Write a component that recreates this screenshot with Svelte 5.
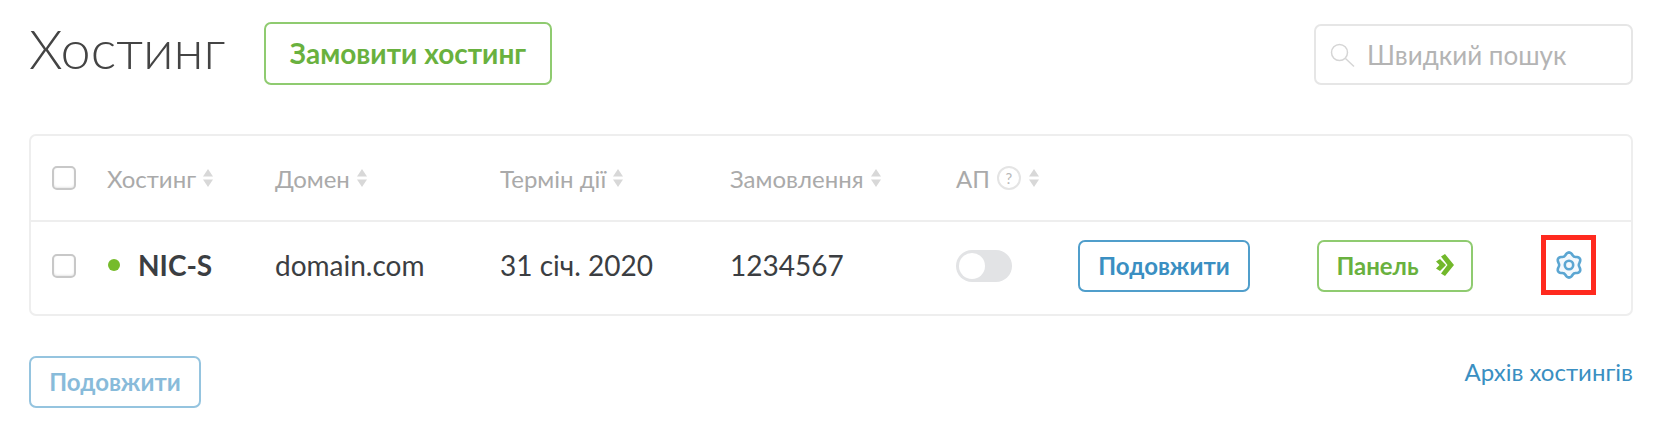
<script lang="ts">
	const columns = ['Хостинг', 'Домен', 'Термін дії', 'Замовлення'];

	// six soft lobes around the centre of a 28x28 box
	const gearPoints = Array.from({ length: 72 }, (_, i) => {
		const angle = (i * Math.PI) / 36;
		const radius = 11.2 + 1.4 * Math.cos(6 * (angle - Math.PI / 2));
		return `${(14 + radius * Math.cos(angle)).toFixed(2)},${(14 + radius * Math.sin(angle)).toFixed(2)}`;
	}).join(' ');
</script>

{#snippet sort()}
	<svg class="sort" viewBox="0 0 12 20" width="12" height="20" aria-hidden="true">
		<path d="M6 1 11 8.500H1z" />
		<path d="M6 19 1 11.500h10z" />
	</svg>
{/snippet}

<main class="page">
	<header class="top">
		<h1 class="top__title">Хостинг</h1>
		<button class="btn btn--green btn--large">Замовити хостинг</button>
		<div class="search">
			<svg class="search__icon" viewBox="0 0 26 26" width="26" height="26" aria-hidden="true">
				<circle cx="10.5" cy="10.5" r="8" />
				<path d="m16.500 16.500 8.500 8" />
			</svg>
			<span class="search__text">Швидкий пошук</span>
		</div>
	</header>

	<section class="card">
		<div class="row row--head">
			<span class="check"></span>
			{#each columns as column}
				<span class="cell-head">{column} {@render sort()}</span>
			{/each}
			<span class="cell-head">
				АП
				<span class="hint">?</span>
				{@render sort()}
			</span>
		</div>
		<div class="row row--body">
			<span class="check"></span>
			<span class="name cell"><i class="dot"></i>NIC-S</span>
			<span class="cell">domain.com</span>
			<span class="cell">31 січ. 2020</span>
			<span class="cell">1234567</span>
			<span class="toggle"><i></i></span>
			<button class="btn btn--blue">Подовжити</button>
			<button class="btn btn--green btn--panel">
				Панель
				<svg viewBox="0 0 18 22" width="18" height="22" aria-hidden="true">
					<path d="M0 7.500 4 5l6 6-6 6-4-2.500L3.500 11z" />
					<path d="M5 2.500 9 0l9 11-9 11-4-2.500L11.500 11z" />
				</svg>
			</button>
			<span class="settings">
				<svg viewBox="0 0 28 28" width="28" height="28" aria-hidden="true">
					<polygon points={gearPoints} />
					<circle cx="14" cy="14" r="4.200" />
				</svg>
			</span>
		</div>
	</section>

	<footer class="bottom">
		<button class="btn btn--blue btn--faded">Подовжити</button>
		<span class="bottom__link">Архів хостингів</span>
	</footer>
</main>

<style>
	:global(body) {
		margin: 0;
		background: #fff;
	}

	.page {
		box-sizing: border-box;
		padding: 22px 47px 0 29px;
		width: 1680px;
		height: 436px;
		color: #3b3e42;
		font-family: Lato, "Noto Sans", sans-serif;
	}

	.top {
		display: flex;
		align-items: center;
		height: 63px;
	}

	.top__title {
		margin: 0 39px 10px 0;
		width: 196px;
		color: #444;
		font-size: 54px;
		font-weight: 300;
		line-height: 54px;
		white-space: nowrap;
	}

	.btn {
		display: inline-flex;
		align-items: center;
		justify-content: center;
		box-sizing: border-box;
		border: 2px solid;
		border-radius: 7px;
		background: #fff;
		padding: 0 0 2px;
		width: 172px;
		height: 52px;
		font-family: inherit;
		font-size: 24px;
		font-weight: 700;
	}

	.btn--green {
		border-color: #8fcb70;
		color: #69b13e;
	}

	.btn--blue {
		border-color: #509ecb;
		color: #3a8fc2;
	}

	.btn--large {
		width: 288px;
		height: 63px;
		font-size: 28px;
	}

	.btn--panel {
		gap: 17px;
		width: 156px;
	}

	.btn--panel svg {
		fill: #72b82b;
	}

	.btn--faded {
		opacity: 0.6;
	}

	.search {
		display: flex;
		align-items: center;
		gap: 12px;
		box-sizing: border-box;
		margin-top: 2px;
		margin-left: auto;
		border: 2px solid #e6e6e6;
		border-radius: 7px;
		padding: 0 0 0 13px;
		width: 319px;
		height: 61px;
		color: #b4b4b4;
		font-size: 26px;
	}

	.search__icon {
		flex: none;
		fill: none;
		stroke: #d5d5d5;
		stroke-width: 1.500;
	}

	.card {
		margin-top: 49px;
		border: 2px solid #eee;
		border-radius: 7px;
	}

	.row {
		display: grid;
		grid-template-columns: 55px 168px 225px 230px 226px 122px 239px 225px 1fr;
		align-items: center;
		padding-left: 21px;
	}

	.row--head {
		grid-template-columns: 55px 168px 225px 230px 226px 1fr;
		border-bottom: 2px solid #eee;
		height: 84px;
		color: #aaa;
		font-size: 24px;
	}

	.row--body {
		box-sizing: border-box;
		padding-bottom: 4px;
		height: 92px;
		font-size: 28px;
	}

	.cell {
		padding-bottom: 2px;
	}

	.check {
		box-sizing: border-box;
		border: 2px solid #c8c8c8;
		border-radius: 5px;
		box-shadow: inset 0 -1px 2px #e8e8e8;
		width: 24px;
		height: 24px;
	}

	.cell-head {
		display: flex;
		align-items: center;
		gap: 6px;
	}

	.sort {
		fill: #d8d8d8;
	}

	.hint {
		display: flex;
		align-items: center;
		justify-content: center;
		box-sizing: border-box;
		margin: 0 1px;
		border: 2px solid #e4e4e4;
		border-radius: 50%;
		width: 24px;
		height: 24px;
		color: #b8b8b8;
		font-size: 15px;
	}

	.name {
		display: flex;
		align-items: center;
		font-weight: 700;
	}

	.dot {
		margin: 0 18px 0 1px;
		border-radius: 50%;
		background: #76bb2b;
		width: 12px;
		height: 12px;
	}

	.toggle {
		display: block;
		box-sizing: border-box;
		border-radius: 16px;
		background: #e2e3e5;
		padding: 3px;
		width: 56px;
		height: 32px;
	}

	.toggle i {
		display: block;
		border-radius: 50%;
		background: #fff;
		width: 26px;
		height: 26px;
	}

	.settings {
		display: flex;
		align-items: center;
		justify-content: center;
		box-sizing: border-box;
		margin: -2px 0 0 -1px;
		border: 5px solid #ff2a1f;
		width: 55px;
		height: 60px;
	}

	.settings svg {
		fill: #f4f9fd;
		stroke: #5ba6d2;
		stroke-width: 2.600;
	}

	.bottom {
		display: flex;
		justify-content: space-between;
		margin-top: 40px;
	}

	.bottom__link {
		margin-top: 1px;
		color: #3a8fc2;
		font-size: 24px;
	}
</style>
